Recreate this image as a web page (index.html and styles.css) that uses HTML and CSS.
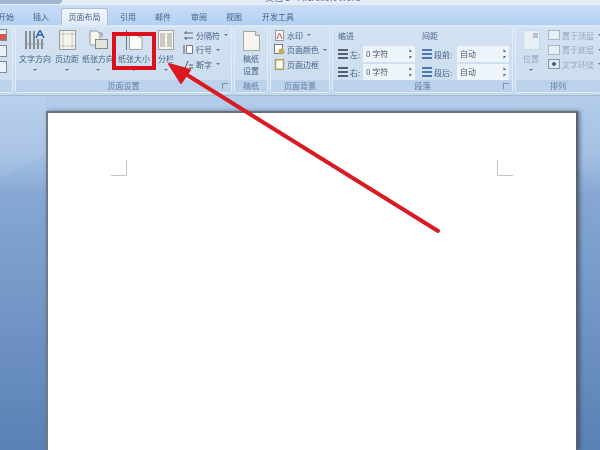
FILE: index.html
```html
<!DOCTYPE html>
<html lang="zh">
<head>
    <meta charset="UTF-8">
    <title>页面布局</title>
    <link rel="stylesheet" href="styles.css">
</head>
<body>
<div class="app">
    <div class="titlebar">
        <div class="quick-bar"></div>
        <div class="doc-title">文档 1 - Microsoft Word</div>
    </div>
    <div class="tabs">
        <span class="tab tab-start">开始</span>
        <span class="tab tab-insert">插入</span>
        <span class="tab tab-active">页面布局</span>
        <span class="tab tab-ref">引用</span>
        <span class="tab tab-mail">邮件</span>
        <span class="tab tab-review">审阅</span>
        <span class="tab tab-view">视图</span>
        <span class="tab tab-dev">开发工具</span>
    </div>
    <div class="ribbon">
        <div class="group group-theme">
            <div class="group-body theme-col">
                <i class="theme-icon red"></i>
                <i class="theme-icon"></i>
                <i class="theme-icon"></i>
            </div>
            <div class="group-label"></div>
        </div>
        <div class="group group-setup">
            <div class="group-body setup-body">
                <div class="big-btn w-text">
                    <svg width="20" height="20" viewBox="0 0 20 20"><path d="M1 1v18M5 1v18M9 1v18M13 9v10M17 9v10" stroke="#555" stroke-width="1.2"/><path d="M0 14h19" stroke="#999"/><path d="M11 8l3.500-7h1l3.500 7M13 5h5" stroke="#3a62a8" stroke-width="1.6" fill="none"/></svg>
                    <span>文字方向</span><b class="drop"></b>
                </div>
                <div class="big-btn w-margin">
                    <svg width="17" height="20" viewBox="0 0 17 20"><rect x="0.500" y="0.500" width="16" height="19" fill="#f4f3ee" stroke="#9a9a9a"/><path d="M4 1v18M13 1v18M1 4h15M1 16h15" stroke="#c6c5be"/></svg>
                    <span>页边距</span><b class="drop"></b>
                </div>
                <div class="big-btn w-orient">
                    <svg width="19" height="20" viewBox="0 0 19 20"><path d="M1 1h7l3 3v11H1z" fill="#f6f5f0" stroke="#999"/><rect x="6.500" y="9.500" width="12" height="9" fill="#e4e3dc" stroke="#888"/><path d="M10 3h3v4" stroke="#888" fill="none"/></svg>
                    <span>纸张方向</span><b class="drop"></b>
                </div>
                <div class="big-btn w-size">
                    <svg width="18" height="20" viewBox="0 0 18 20"><path d="M1.500 0v20" stroke="#777"/><path d="M4.500 3.500h9l3.500 3.500v12.500H4.500z" fill="#fafaf6" stroke="#a5a5a0"/><path d="M13.500 3.500v3.500h3.500" fill="#ddd" stroke="#a5a5a0"/></svg>
                    <span>纸张大小</span><b class="drop"></b>
                </div>
                <div class="big-btn w-cols">
                    <svg width="16" height="20" viewBox="0 0 16 20"><rect x="0.500" y="0.500" width="15" height="19" fill="#f4f3ee" stroke="#a5a5a0"/><rect x="2" y="3" width="5" height="14" fill="#c9c9c4"/><rect x="9" y="3" width="5" height="14" fill="#c9c9c4"/></svg>
                    <span>分栏</span><b class="drop"></b>
                </div>
                <div class="small-col">
                    <div class="small-btn"><svg width="11" height="11" viewBox="0 0 11 11"><path d="M1 3h9M1 8h9M3 1v3M3 7v3" stroke="#667" fill="none"/></svg><span>分隔符</span><b class="caret"></b></div>
                    <div class="small-btn"><svg width="11" height="11" viewBox="0 0 11 11"><path d="M1 1v9" stroke="#556"/><path d="M3.500 1.500h6v8h-6z" stroke="#778" fill="#fff"/></svg><span>行号</span><b class="caret"></b></div>
                    <div class="small-btn"><svg width="11" height="11" viewBox="0 0 11 11"><path d="M2 9l3-7M6 6h4M6 9h4" stroke="#556" fill="none"/></svg><span>断字</span><b class="caret"></b></div>
                </div>
            </div>
            <div class="group-label">页面设置<i class="launcher"></i></div>
        </div>
        <div class="group group-paper">
            <div class="group-body paper-body">
                <svg width="17" height="20" viewBox="0 0 17 20"><path d="M0.500 0.500h12l4 4v15H0.500z" fill="#f5f4ef" stroke="#a5a5a0"/><path d="M12.500 0.500v4h4" fill="#ddd" stroke="#a5a5a0"/></svg>
                <span>稿纸<br>设置</span>
            </div>
            <div class="group-label">稿纸</div>
        </div>
        <div class="group group-bg">
            <div class="group-body bg-body">
                <div class="small-btn"><svg width="11" height="11" viewBox="0 0 11 11"><rect x="1.500" y="0.500" width="8" height="10" fill="#fff" stroke="#999"/><path d="M3 9l2.500-6L8 9" stroke="#c44" fill="none"/></svg><span>水印</span><b class="caret"></b></div>
                <div class="small-btn"><svg width="11" height="11" viewBox="0 0 11 11"><rect x="0.500" y="0.500" width="8" height="9" fill="#fff" stroke="#777"/><circle cx="7.500" cy="7.500" r="3" fill="#c9a95c"/></svg><span>页面颜色</span><b class="caret"></b></div>
                <div class="small-btn"><svg width="11" height="11" viewBox="0 0 11 11"><rect x="1.500" y="0.750" width="8" height="9.500" fill="#fff" stroke="#b59a5a" stroke-width="1.500"/></svg><span>页面边框</span></div>
            </div>
            <div class="group-label">页面背景</div>
        </div>
        <div class="group group-para">
            <div class="group-body para-body">
                <div class="para-col col-indent">
                    <div class="para-head">缩进</div>
                    <div class="field-row"><i class="para-icon"></i><span class="field-label">左:</span><div class="spin">0 字符<i class="arrows"></i></div></div>
                    <div class="field-row"><i class="para-icon"></i><span class="field-label">右:</span><div class="spin">0 字符<i class="arrows"></i></div></div>
                </div>
                <div class="para-col col-space">
                    <div class="para-head">间距</div>
                    <div class="field-row"><i class="para-icon blue"></i><span class="field-label">段前:</span><div class="spin">自动<i class="arrows"></i></div></div>
                    <div class="field-row"><i class="para-icon blue"></i><span class="field-label">段后:</span><div class="spin">自动<i class="arrows"></i></div></div>
                </div>
            </div>
            <div class="group-label">段落<i class="launcher"></i></div>
        </div>
        <div class="group group-arrange">
            <div class="group-body arrange-body">
                <div class="pos-btn">
                    <svg width="17" height="20" viewBox="0 0 17 20"><rect x="0.500" y="0.500" width="16" height="19" fill="#e6eef6" stroke="#cfd9e3"/><rect x="10" y="3" width="5" height="5" fill="#b9c0c6"/></svg>
                    <span>位置</span><b class="drop"></b>
                </div>
                <div class="arrange-col">
                    <div class="small-btn"><i class="stack"></i><span>置于顶层</span><b class="caret"></b></div>
                    <div class="small-btn"><i class="stack"></i><span>置于底层</span><b class="caret"></b></div>
                    <div class="small-btn"><i class="wrap"></i><span>文字环绕</span><b class="caret"></b></div>
                </div>
            </div>
            <div class="group-label">排列</div>
        </div>
    </div>
    <div class="workspace">
        <div class="page">
            <i class="crop crop-left"></i>
            <i class="crop crop-right"></i>
        </div>
    </div>
</div>
<div class="highlight"></div>
<svg class="arrow" width="600" height="450" viewBox="0 0 600 450">
    <path d="M438 231L184 73" stroke="#da1a22" stroke-width="4" stroke-linecap="round"/>
    <path d="M169 64L190 70L181 83z" fill="#da1a22" stroke="#da1a22" stroke-width="2" stroke-linejoin="round"/>
</svg>
</body>
</html>
```

FILE: styles.css
```css
* {
    box-sizing: border-box;
}
html, body {
    margin: 0;
    height: 100%;
    overflow: hidden;
}
body {
    font-family: "Noto Sans CJK SC", "Liberation Sans", sans-serif;
    font-size: 8px;
    color: #466284;
    position: relative;
}
.app {
    width: 600px;
    height: 450px;
    display: flex;
    flex-direction: column;
    background: #bcd3ee;
}
.titlebar {
    height: 5px;
    flex: none;
    position: relative;
    background: #e3ecf7;
    overflow: hidden;
    filter: blur(0.4px);
}
.quick-bar {
    width: 62px;
    height: 4px;
    background: #9fb6d3;
    border-radius: 0 0 8px 0;
}
.doc-title {
    position: absolute;
    left: 265px;
    top: -8px;
    line-height: 12px;
    font-size: 9px;
    color: #5c6f86;
}
.tabs {
    height: 20px;
    flex: none;
    position: relative;
    background: linear-gradient(#c9ddf6, #b4d1f2);
    filter: blur(0.4px);
}
.tab {
    position: absolute;
    top: 5px;
    line-height: 14px;
    color: #3f5f86;
}
.tab-start { left: -2px; }
.tab-insert { left: 33px; }
.tab-active {
    left: 61px;
    top: 3px;
    width: 47px;
    height: 18px;
    line-height: 15px;
    text-align: center;
    background: linear-gradient(#f4f8fd, #dfeafa);
    border: 1px solid #a8c2e0;
    border-bottom: none;
    border-radius: 3px 3px 0 0;
    z-index: 1;
}
.tab-ref { left: 120px; }
.tab-mail { left: 155px; }
.tab-review { left: 191px; }
.tab-view { left: 226px; }
.tab-dev { left: 262px; }
.ribbon {
    height: 71px;
    flex: none;
    display: flex;
    gap: 2px;
    padding: 1px 0 2px;
    background: linear-gradient(#d5e4f5, #c3d8ec);
    border-bottom: 1px solid #9fbcc9;
    filter: blur(0.5px);
    overflow: hidden;
}
.group {
    flex: none;
    display: flex;
    flex-direction: column;
    background: linear-gradient(#d3e2f3, #cbddef);
    border: 1px solid #e1ecf7;
    border-radius: 3px;
}
.group-body {
    height: 53px;
    flex: none;
}
.group-label {
    flex: 1;
    position: relative;
    line-height: 12px;
    text-align: center;
    background: #bbd2ea;
    color: #5f7fa3;
}
.launcher {
    position: absolute;
    right: 3px;
    top: 3px;
    width: 6px;
    height: 6px;
    border: 1px solid #7e93aa;
    border-width: 1px 0 0 1px;
}
.group-theme { width: 13px; border-radius: 0 3px 3px 0; border-left: none; }
.group-setup { width: 217px; }
.group-paper { width: 34px; }
.group-bg { width: 60px; }
.group-para { width: 181px; }
.group-arrange { width: 85px; border-right: none; }
.theme-col {
    display: flex;
    flex-direction: column;
    gap: 4px;
    padding-top: 2px;
}
.theme-icon {
    width: 7px;
    height: 12px;
    background: #eef1f4;
    border: 1px solid #7f8a96;
    border-left: none;
}
.theme-icon.red {
    background: linear-gradient(#eef1f4 40%, #d05a50 40%);
}
.setup-body {
    display: flex;
}
.big-btn {
    flex: none;
    display: flex;
    flex-direction: column;
    align-items: center;
    padding-top: 3px;
    line-height: 12px;
    white-space: nowrap;
}
.big-btn span {
    margin-top: 3px;
}
.w-text { width: 38px; }
.w-margin { width: 26px; }
.w-orient { width: 36px; }
.w-size { width: 36px; }
.w-cols { width: 28px; }
.drop {
    margin-top: 4px;
    width: 0;
    height: 0;
    border: 2px solid transparent;
    border-top: 2px solid #5e7691;
}
.small-col, .bg-body, .arrange-col {
    display: flex;
    flex-direction: column;
    gap: 2.500px;
    padding-top: 2px;
}
.small-col {
    margin-left: 3px;
}
.bg-body {
    padding-left: 3px;
}
.small-btn {
    display: flex;
    align-items: center;
    gap: 2px;
    height: 12px;
    white-space: nowrap;
}
.caret {
    width: 0;
    height: 0;
    margin-left: 2px;
    border: 2px solid transparent;
    border-top: 2px solid #5e7691;
    transform: translateY(1px);
}
.paper-body {
    display: flex;
    flex-direction: column;
    align-items: center;
    padding-top: 4px;
    line-height: 12px;
    text-align: center;
}
.paper-body span {
    margin-top: 2px;
}
.para-body {
    display: flex;
}
.para-col {
    padding: 2px 0 0 3px;
}
.col-indent {
    width: 84px;
    margin-left: 2px;
}
.col-space {
    width: 92px;
}
.para-head {
    line-height: 14px;
    margin-bottom: 3px;
}
.field-row {
    display: flex;
    align-items: center;
    gap: 2px;
    height: 16px;
    margin-bottom: 2px;
    white-space: nowrap;
}
.field-label {
    width: 11px;
    flex: none;
}
.col-space .field-label {
    width: 21px;
}
.para-icon {
    width: 10px;
    height: 11px;
    flex: none;
    background: repeating-linear-gradient(#55606c 0 2px, #d3e2f3 2px 4px);
}
.para-icon.blue {
    background: repeating-linear-gradient(#4d78ac 0 2px, #d3e2f3 2px 4px);
}
.spin {
    position: relative;
    width: 52px;
    height: 16px;
    line-height: 15px;
    padding-left: 3px;
    background: #eef4fb;
    color: #45586c;
    flex: none;
}
.arrows {
    position: absolute;
    right: 3px;
    top: 3px;
    width: 5px;
    height: 10px;
    background: linear-gradient(#4f5b68 0 3px, transparent 3px 7px, #4f5b68 7px);
    clip-path: polygon(50% 0, 100% 30%, 0 30%, 0 70%, 100% 70%, 50% 100%);
}
.arrange-body {
    display: flex;
    color: #93a9c2;
}
.pos-btn {
    width: 30px;
    flex: none;
    display: flex;
    flex-direction: column;
    align-items: center;
    padding-top: 3px;
    line-height: 12px;
}
.pos-btn span {
    margin-top: 3px;
}
.arrange-col {
    margin-left: 2px;
}
.stack, .wrap {
    width: 12px;
    height: 10px;
    flex: none;
    border: 1px solid #a9b6c4;
    background: #e6eef6;
}
.wrap {
    border-color: #8799ab;
    background: #dfe8f2 radial-gradient(#4b6070 30%, transparent 34%);
}
.workspace {
    flex: 1;
    position: relative;
    padding: 15px 22px 0 46px;
    background: linear-gradient(#b4cdeb 0, #a3bfe3 60px, #86a7d3 100px, #5a81b5 354px);
}
.workspace::before {
    content: "";
    position: absolute;
    left: 0;
    top: 0;
    width: 46px;
    height: 82px;
    background: rgba(255, 255, 255, 0.08);
    clip-path: polygon(0 0, 100% 0, 100% 58px, 0 82px);
}
.page {
    position: relative;
    height: 100%;
    background: #fff;
    border-top: 2px solid #69717c;
    border-left: 2px solid #6f7a88;
    border-right: 2px solid #59626e;
    box-shadow: 2px 0 4px rgba(40, 50, 70, 0.55);
}
.crop {
    position: absolute;
    top: 47px;
    width: 16px;
    height: 16px;
    border-bottom: 1px solid #c4c4c4;
}
.crop-left {
    left: 63px;
    border-right: 1px solid #c4c4c4;
}
.crop-right {
    right: 63px;
    border-left: 1px solid #c4c4c4;
}
.highlight {
    position: absolute;
    left: 112px;
    top: 32px;
    width: 44px;
    height: 38px;
    border: 4px solid #d8111c;
}
.arrow {
    position: absolute;
    left: 0;
    top: 0;
}
```
